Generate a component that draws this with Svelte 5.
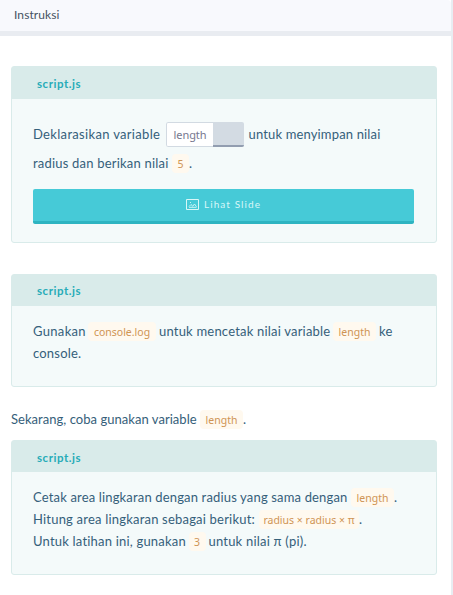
<script>
  const file = 'script.js';
</script>

<main class="panel">
  <header>Instruksi</header>
  <div class="content">
    <section class="card first">
      <h2>{file}</h2>
      <div class="body">
        <p class="line tall">
          <span class="t wide" style:width="133px">Deklarasikan variable</span><span class="token"><span class="name">length</span><span class="handle"></span></span><span class="after">untuk menyimpan nilai</span>
        </p>
        <p class="line tall">
          <span class="t" style:width="139px">radius dan berikan nilai</span><code style:width="17px">5</code><span>.</span>
        </p>
        <button>
          <svg width="13" height="11" viewBox="0 0 13 11" fill="none" stroke="currentColor">
            <path d="M.5.5h12v10H.5z" />
            <path d="M3 8.3h7.5M3 7.5l2-2 1.8 1.7L8.5 5l2 2.7M4 3.5h1" stroke-width=".9" />
          </svg>
          <span>Lihat Slide</span>
        </button>
      </div>
    </section>

    <section class="card second">
      <h2>{file}</h2>
      <div class="body">
        <p class="line"><span class="t wide" style:width="55px">Gunakan</span><code style:width="68px">console.log</code><span class="t gap" style:width="174px">untuk mencetak nilai variable</span><code style:width="43px">length</code><span class="gap">ke</span></p>
        <p class="line">console.</p>
      </div>
    </section>

    <p class="line loose"><span class="t tight" style:width="189px">Sekarang, coba gunakan variable</span><code style:width="43px">length</code><span>.</span></p>

    <section class="card third">
      <h2>{file}</h2>
      <div class="body">
        <p class="line"><span class="t snug" style:width="318px">Cetak area lingkaran dengan radius yang sama dengan</span><code style:width="43px">length</code><span>.</span></p>
        <p class="line"><span class="t" style:width="226px">Hitung area lingkaran sebagai berikut:</span><code style:width="100px">radius × radius × π</code><span>.</span></p>
        <p class="line"><span class="t" style:width="155.5px">Untuk latihan ini, gunakan</span><code style:width="17px">3</code><span class="gap">untuk nilai π (pi).</span></p>
      </div>
    </section>
  </div>
</main>

<style>
  :global(body) { margin: 0; overflow: hidden; background: #fff; }
  .panel {
    box-sizing: border-box;
    width: 453px;
    height: 595px;
    overflow: hidden;
    border-right: 2px solid #e8edf2;
    background: #fff;
    color: #35607a;
    font: 13px/22px Lato, "Noto Sans", sans-serif;
    letter-spacing: .2px;
  }
  header {
    box-sizing: border-box;
    height: 36px;
    padding-left: 14px;
    border-bottom: 5px solid #e9ecf1;
    border-top-right-radius: 4px;
    background: #f8f9fd;
    color: #465262;
    font-size: 12px;
    line-height: 30px;
    letter-spacing: .1px;
  }
  .content { padding: 30px 14px 0 11px; }
  .card {
    box-sizing: border-box;
    border: 1px solid #d9ebea;
    border-radius: 3px;
    background: #f4fafa;
  }
  .first { height: 177px; margin-bottom: 31px; }
  .second { height: 113px; }
  .third { height: 135px; }
  h2 {
    box-sizing: border-box;
    height: 31px;
    margin: 0;
    padding-left: 25px;
    background: #d9ebea;
    color: #27abb8;
    font-size: 11.5px;
    font-weight: 700;
    line-height: 32px;
    letter-spacing: .55px;
  }
  .first h2 { height: 32px; line-height: 33px; }
  .third h2 { line-height: 34px; }
  .body { padding: 14px 22px 0 21px; }
  .line {
    display: flex;
    align-items: center;
    height: 22px;
    margin: 0;
    white-space: nowrap;
  }
  .t { flex: none; }
  .wide { letter-spacing: .32px; }
  .snug { letter-spacing: .16px; }
  .tight { letter-spacing: .04px; }
  .gap { margin-left: 3px; }
  .second .t.gap { width: 175px; }
  .first .body { padding-top: 21px; }
  .tall { height: 29px; }
  .tall > span:not(.token) { margin-top: -1px; }
  .tall code { margin-top: 0; }
  .loose { margin: 21px 0 10px; }
  code {
    flex: none;
    height: 19px;
    margin-top: 1px;
    border-radius: 4px;
    background: #fff9ef;
    color: #cf9454;
    font: 10.5px/20px "Noto Sans", sans-serif;
    letter-spacing: 0;
    text-align: center;
  }
  .token {
    box-sizing: border-box;
    display: flex;
    flex: none;
    width: 78px;
    height: 25px;
    overflow: hidden;
    border-radius: 2px;
  }
  .name {
    box-sizing: border-box;
    width: 47px;
    border: 1px solid #d2dae2;
    border-right: 0;
    border-radius: 2px 0 0 2px;
    background: #fff;
    color: #77788f;
    font: 11px/23px "Noto Sans", sans-serif;
    letter-spacing: -.1px;
    text-align: center;
  }
  .handle {
    box-sizing: border-box;
    width: 31px;
    border-bottom: 2px solid #929db0;
    background: #d3dbe3;
  }
  .tall .after { margin-left: 4.5px; letter-spacing: .15px; }
  button {
    box-sizing: border-box;
    display: flex;
    align-items: center;
    justify-content: center;
    gap: 5px;
    width: 381px;
    height: 35px;
    margin: 11px 0 0;
    padding: 0 0 2px;
    border: 0;
    border-bottom: 3px solid #2eb4c1;
    border-radius: 2px;
    background: #46cad7;
    color: #d8f7f7;
    font: 10px/14px Lato, sans-serif;
    letter-spacing: 1.08px;
  }
</style>
